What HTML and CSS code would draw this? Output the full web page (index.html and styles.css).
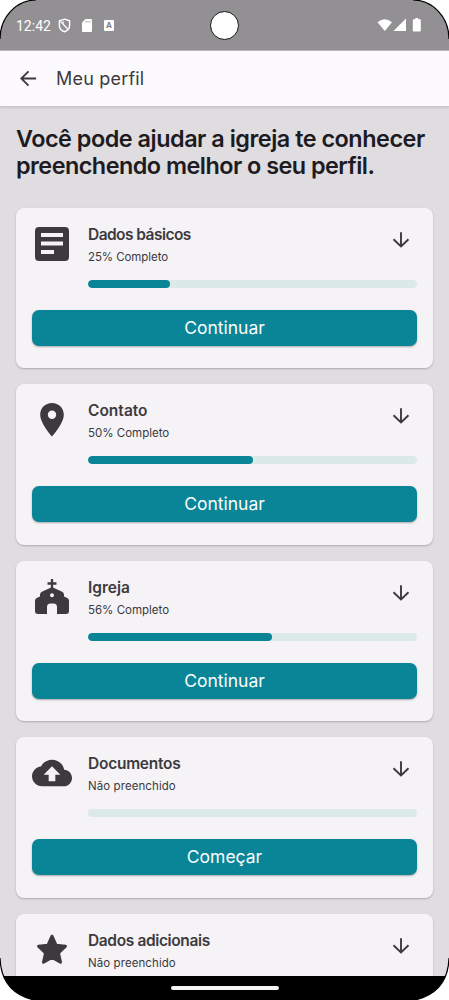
FILE: index.html
```html
<!DOCTYPE html>
<html lang="pt-BR">
<head>
<meta charset="utf-8">
<title>Meu perfil</title>
<link rel="stylesheet" href="styles.css">
</head>
<body>
<svg class="defs" width="0" height="0">
  <symbol id="down" viewBox="0 0 24 24"><path d="M12 4.200v14M4.500 11.300l7.500 7.200 7.500-7.200" fill="none" stroke="currentColor" stroke-width="1.900"/></symbol>
</svg>
<div class="phone">
  <header class="status">
    <span class="clock">12:42</span>
    <svg class="shield" viewBox="0 0 14 16" fill="none" stroke="currentColor" stroke-width="1.5"><path d="M7 1.2 12.5 3v5c0 3.200-2.300 5.600-5.500 6.700C3.800 13.600 1.500 11.200 1.500 8V3z"/><path d="M2.500 3.500 11 12.500M5.500 3.500v3l4 4" stroke-width="1.300"/></svg>
    <svg class="sd" viewBox="0 0 10 13"><path d="M3.500 0H9q1 0 1 1v11q0 1-1 1H1q-1 0-1-1V3.500z" fill="currentColor"/><path d="M4 1.700v2M6 1.700v2M8 1.700v2" stroke="#929093" stroke-width=".7"/></svg>
    <span class="badge">A</span>
    <span class="camera"></span>
    <svg class="signals" viewBox="0 0 46 16" fill="currentColor"><path d="M.5 4.200Q7.500-1.800 15 4.200L7.800 13z"/><path d="M29 .5V13H16.500z"/><path d="M38.300 0h3v1.300h1.500q1 0 1 1V12.500q0 1-1 1h-6q-1 0-1-1V2.300q0-1 1-1h1.500z"/></svg>
  </header>
  <nav class="appbar">
    <svg class="back" viewBox="0 0 24 24"><path d="M20 12H5M12 4.500 4.500 12l7.500 7.500" fill="none" stroke="currentColor" stroke-width="1.900"/></svg>
    <h1 class="title">Meu perfil</h1>
  </nav>
  <main class="content">
    <h2 class="headline"><span class="line line-a">Você pode ajudar a igreja te conhecer</span><span class="line line-b">preenchendo melhor o seu perfil.</span></h2>
    <section class="card">
      <div class="top">
        <svg class="icon" viewBox="0 0 40 40"><path fill="currentColor" fill-rule="evenodd" d="M7 3h26q4 0 4 4v26q0 4-4 4H7q-4 0-4-4V7q0-4 4-4zM9 9v4h22V9zm0 8.500v4h22v-4zM9 26v4h13v-4z"/></svg>
        <div class="info"><h3 class="name n1">Dados básicos</h3><p class="state s1">25% Completo</p><div class="bar"><div class="fill" style="width:25%"></div></div></div>
        <svg class="arrow"><use href="#down"/></svg>
      </div>
      <button class="button">Continuar</button>
    </section>
    <section class="card">
      <div class="top">
        <svg class="icon" viewBox="0 0 40 40"><path fill="currentColor" fill-rule="evenodd" d="M20 3C13.300 3 8.200 8.100 8.200 14.700 8.200 23.500 20 36.500 20 36.500S31.800 23.500 31.800 14.700C31.800 8.100 26.700 3 20 3zm0 7.500a4.200 4.200 0 1 1 0 8.400 4.200 4.200 0 0 1 0-8.400z"/></svg>
        <div class="info"><h3 class="name n2">Contato</h3><p class="state">50% Completo</p><div class="bar"><div class="fill" style="width:50%"></div></div></div>
        <svg class="arrow"><use href="#down"/></svg>
      </div>
      <button class="button">Continuar</button>
    </section>
    <section class="card">
      <div class="top">
        <svg class="icon" viewBox="0 0 40 40"><path d="M20 2V12M15.500 6.500h9" stroke="currentColor" stroke-width="2.300"/><path fill="currentColor" fill-rule="evenodd" d="M20 10.300Q21 10.300 22 10.900L29.600 14.500Q32 15.500 32 17.500v2l3.400 1.400Q37 21.800 37 23.800V34q0 3-3 3h-9V30q0-3.500-3.500-3.500h-3Q15 26.500 15 30v7H6q-3 0-3-3v-10q0-2 1.600-2.900L8 19.500V17.500q0-2 2.400-3L18 10.900Q19 10.300 20 10.300zM20 16.200a2 2 0 1 0 0 4 2 2 0 0 0 0-4z"/></svg>
        <div class="info"><h3 class="name n3">Igreja</h3><p class="state">56% Completo</p><div class="bar"><div class="fill" style="width:56%"></div></div></div>
        <svg class="arrow"><use href="#down"/></svg>
      </div>
      <button class="button">Continuar</button>
    </section>
    <section class="card">
      <div class="top">
        <svg class="icon" viewBox="0 0 24 24"><path fill="currentColor" d="M19.350 10.040C18.670 6.590 15.640 4 12 4 9.110 4 6.600 5.640 5.350 8.040 2.340 8.360 0 10.910 0 14c0 3.310 2.690 6 6 6h13c2.760 0 5-2.240 5-5 0-2.640-2.050-4.780-4.650-4.960zM14 13v4h-4v-4H7l5-5 5 5h-3z"/></svg>
        <div class="info"><h3 class="name n4">Documentos</h3><p class="state s4">Não preenchido</p><div class="bar"></div></div>
        <svg class="arrow"><use href="#down"/></svg>
      </div>
      <button class="button">Começar</button>
    </section>
    <section class="card">
      <div class="top">
        <svg class="icon" viewBox="0 0 40 40"><path d="M20 6.200l4 9 9.500 1-7 6.700 2 9.300-8.500-4.700-8.500 4.700 2-9.300-7-6.700 9.500-1z" fill="currentColor" stroke="currentColor" stroke-width="3" stroke-linejoin="round"/></svg>
        <div class="info"><h3 class="name n5">Dados adicionais</h3><p class="state s4">Não preenchido</p></div>
        <svg class="arrow"><use href="#down"/></svg>
      </div>
    </section>
  </main>
  <footer class="gesture"><span class="handle"></span></footer>
  <svg class="frame" viewBox="0 0 449 1000"><path fill="#fff" d="M0 0H36A36 39 0 0 0 0 39zM449 0V39A36 39 0 0 0 413 0zM0 958Q1 992 34 1000H0zM449 958Q448 992 415 1000H449z"/><path fill="none" stroke="#000" stroke-width="1.200" d="M0 39A36 39 0 0 1 36 0M413 0A36 39 0 0 1 449 39M449 958Q448 992 415 1000M34 1000Q1 992 0 958"/></svg>
</div>
</body>
</html>
```
FILE: styles.css
```css
* { box-sizing: border-box; margin: 0; padding: 0; }
body { background: #fff; font-family: Inter, "Liberation Sans", sans-serif; color: #3c3a3e; }
.defs { display: none; }
.phone { position: relative; width: 449px; height: 1000px; display: flex; flex-direction: column; overflow: hidden; background: #dfdde0; }
.status { position: relative; height: 51px; flex: none; background: #929093; border-bottom: 1px solid #b9b7ba; color: #fff; display: flex; align-items: center; padding: 1px 26px 0 16px; }
.clock { font: 14px/20px Roboto, sans-serif; width: 42px; }
.shield { width: 13px; height: 15px; }
.sd { width: 10px; height: 13px; margin-left: 11px; }
.badge { margin-left: 12px; width: 10px; height: 11px; border-radius: 1px; background: #fff; color: #858386; font-size: 8px; font-weight: 700; line-height: 11px; text-align: center; }
.camera { position: absolute; left: 210px; top: 11px; width: 29px; height: 29px; border: 1px solid #111; border-radius: 50%; background: #fff; }
.signals { width: 46px; height: 16px; margin-left: auto; margin-top: 1px; }
.appbar { height: 56px; flex: none; background: #fcfafd; border-bottom: 1px solid #c9c7ca; box-shadow: 0 1px 2px #c9c7ca; display: flex; align-items: center; padding-left: 17px; position: relative; }
.back { width: 23px; height: 23px; }
.title { font-size: 18px; font-weight: 400; line-height: 24px; margin-left: 16px; letter-spacing: .2px; }
.content { flex: 1; min-height: 0; overflow: hidden; padding: 19px 16px 0; }
.headline { color: #1d1b1f; font-size: 23.400px; line-height: 26.500px; font-weight: 600; margin-bottom: 28.700px; }
.line { display: block; white-space: nowrap; }
.line-a { letter-spacing: -.48px; }
.line-b { letter-spacing: -.52px; }
.card { height: 160.500px; margin-bottom: 16px; border-radius: 8px; background: #f5f3f6; padding: 16px; box-shadow: 0 1px 2px #aaa8ab; }
.top { display: flex; height: 86px; position: relative; }
.icon { width: 40px; height: 40px; flex: none; }
.info { flex: 1; margin-left: 16px; }
.name { font-size: 15.500px; line-height: 22px; font-weight: 600; white-space: nowrap; }
.n1 { letter-spacing: -.55px; }
.n4 { letter-spacing: -.25px; }
.n5 { letter-spacing: -.37px; }
.state { font-size: 11.500px; line-height: 20px; margin-top: 1px; white-space: nowrap; }
.s1 { letter-spacing: -.08px; }
.s4 { letter-spacing: .08px; }
.bar { height: 8px; margin-top: 13px; border-radius: 4px; background: #dbe9e7; overflow: hidden; }
.fill { height: 8px; border-radius: 4px; background: #0a8598; }
.arrow { position: absolute; right: 4px; top: 4px; width: 24px; height: 24px; }
.button { display: block; width: 100%; height: 36px; border: 0; border-radius: 7px; background: #0a8598; color: #fafdfd; font: 17.500px/36px Inter, sans-serif; box-shadow: 0 1px 2px #aaa8ab; }
.gesture { height: 24px; flex: none; background: #000; display: flex; align-items: center; justify-content: center; }
.handle { width: 108px; height: 4px; border-radius: 2px; background: #f5f5f5; }
.frame { position: absolute; left: 0; top: 0; width: 449px; height: 1000px; }
```
